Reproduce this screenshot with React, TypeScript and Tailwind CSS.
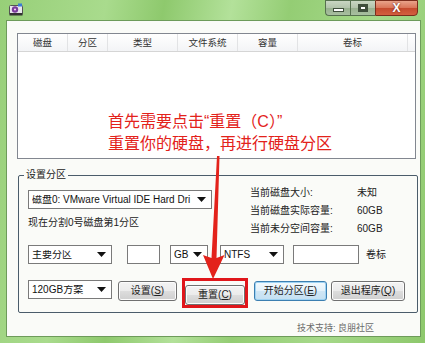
import React from "react";

const FONT = "font-['Liberation_Sans','Noto_Sans_CJK_SC',sans-serif]";

const COLUMNS = [
  { label: "磁盘", w: "w-[50px]" },
  { label: "分区", w: "w-[40px]" },
  { label: "类型", w: "w-[70px]" },
  { label: "文件系统", w: "w-[60px]" },
  { label: "容量", w: "w-[60px]" },
  { label: "卷标", w: "w-[110px]" },
];

const DISK_INFO = [
  { label: "当前磁盘大小:", value: "未知" },
  { label: "当前磁盘实际容量:", value: "60GB" },
  { label: "当前未分空间容量:", value: "60GB" },
];

const Caret = () => (
  <svg width="9" height="5" viewBox="0 0 9 5" className="shrink-0">
    <polygon points="0,0 9,0 4.5,5" fill="#111" />
  </svg>
);

type ComboProps = { text: string; className: string };

const Combo = ({ text, className }: ComboProps) => (
  <div
    className={`h-[19px] flex items-center gap-[3px] bg-white border border-[#7a7a7a] pl-[3px] pr-[5px] ${className}`}
  >
    <span className="flex-1 min-w-0 overflow-hidden whitespace-nowrap text-[10px] leading-none text-[#111]">
      {text}
    </span>
    <Caret />
  </div>
);

type BtnProps = { text: string; hot: string; className: string; focused?: boolean };

const WinButton = ({ text, hot, className, focused }: BtnProps) => (
  <button
    className={`h-[20px] rounded-[3px] border text-[10px] leading-none text-[#222] ${
      focused
        ? "border-[#3c7fb1] bg-[linear-gradient(#f4fafd_0%,#e3f1fa_50%,#cfe6f5_51%,#c4e0f2_100%)] shadow-[inset_0_0_0_1px_#9fd3f3]"
        : "border-[#707070] bg-[linear-gradient(#f3f3f3_0%,#ebebeb_50%,#dddddd_51%,#cfcfcf_100%)] shadow-[inset_0_0_0_1px_#fcfcfc]"
    } ${className}`}
  >
    {text}(<span className="underline">{hot}</span>)
  </button>
);

const TitleIcon = () => (
  <svg width="14" height="13" viewBox="0 0 14 13">
    <rect x="0.5" y="2.5" width="13" height="9" rx="1" fill="#e8e8ec" stroke="#555" />
    <rect x="0.5" y="10" width="13" height="2.5" fill="#333" />
    <circle cx="6" cy="6.5" r="3.2" fill="#7a3c9c" />
    <circle cx="6" cy="6.5" r="1.1" fill="#f2d0f0" />
    <rect x="9" y="0.5" width="4" height="3" fill="#3a7bd5" />
  </svg>
);

const CaptionButtons = () => (
  <div className="flex h-[16px] mr-[7px]">
    <div className="w-[25px] h-full rounded-bl-[4px] border border-r-0 border-[#56704f] bg-[linear-gradient(#c9d6c3_0%,#b1c3aa_50%,#98b08f_51%,#a8bfa0_100%)] flex items-end justify-center pb-[3px]">
      <div className="w-[11px] h-[4px] bg-white border border-[#3f4f3c]" />
    </div>
    <div className="w-[25px] h-full border border-r-0 border-[#56704f] bg-[linear-gradient(#c9d6c3_0%,#b1c3aa_50%,#98b08f_51%,#a8bfa0_100%)] flex items-center justify-center">
      <div className="w-[10px] h-[8px] border-2 border-[#3f4f3c] bg-white shadow-[inset_0_0_0_1px_#3f4f3c]" />
    </div>
    <div className="w-[43px] h-full rounded-br-[4px] border border-[#7a2d1c] bg-[linear-gradient(#e9a38a_0%,#d97457_50%,#c54a2d_51%,#d3603f_100%)] flex items-center justify-center">
      <span className="text-[12px] font-bold leading-none text-white [text-shadow:0_0_2px_#5a1a0e]">X</span>
    </div>
  </div>
);

export default function App() {
  return (
    <div
      className={`relative w-[425px] h-[343px] overflow-hidden ${FONT} bg-[linear-gradient(100deg,#97cf78_0%,#a9db8d_22%,#8ec96d_34%,#b3e19a_48%,#94cd74_60%,#a6d98a_78%,#8dc86c_100%)]`}
    >
      <div className="h-[20px] flex items-start justify-between">
        <div className="pl-[9px] pt-[3px]">
          <TitleIcon />
        </div>
        <CaptionButtons />
      </div>

      <div className="ml-[6px] mr-[4px] h-[317px] border border-[#6d9b5a] bg-[#fafbf8] flex flex-col">
        {/* list of partitions */}
        <div className="relative mt-[12px] ml-[10px] w-[399px] h-[126px] border border-[#828790] bg-white">
          <div className="flex h-[18px] border-b border-[#d5d5d5] bg-[linear-gradient(#ffffff,#f3f4f6)]">
            {COLUMNS.map((c) => (
              <div
                key={c.label}
                className={`${c.w} h-full flex items-center justify-center border-r border-[#e2e3e5] text-[9.5px] leading-none text-[#333]`}
              >
                {c.label}
              </div>
            ))}
          </div>
          <div className="absolute left-[90px] top-[77px] text-[16px] leading-[22px] text-[#e3221b] whitespace-nowrap">
            <p>首先需要点击“重置（C）”</p>
            <p>重置你的硬盘，再进行硬盘分区</p>
          </div>
        </div>

        {/* 设置分区 group */}
        <div className="relative mt-[16px] ml-[11px] w-[400px] h-[138px] border border-[#4b5c6b] rounded-[2px]">
          <span className="absolute -top-[7px] left-[5px] px-[2px] bg-[#fafbf8] text-[10px] leading-[12px] text-[#222]">
            设置分区
          </span>

          <div className="h-[69px] flex">
            <div className="ml-[9px] mt-[14px] w-[184px]">
              <Combo text="磁盘0: VMware Virtual IDE Hard Dri" className="w-[184px]" />
              <p className="mt-[7px] text-[10px] leading-[14px] text-[#222]">现在分割0号磁盘第1分区</p>
            </div>
            <div className="ml-[38px] mt-[8px] text-[10px] leading-[18px] text-[#222]">
              {DISK_INFO.map((r) => (
                <div key={r.label} className="flex">
                  <span className="w-[107px]">{r.label}</span>
                  <span>{r.value}</span>
                </div>
              ))}
            </div>
          </div>

          <div className="flex items-center ml-[9px] h-[19px]">
            <Combo text="主要分区" className="w-[84px]" />
            <div className="ml-[15px] w-[33px] h-[19px] bg-white border border-[#7a7a7a]" />
            <Combo text="GB" className="ml-[10px] w-[38px]" />
            <Combo text="NTFS" className="ml-[12px] w-[64px]" />
            <div className="ml-[9px] w-[66px] h-[19px] bg-white border border-[#7a7a7a]" />
            <span className="ml-[7px] text-[10px] text-[#222]">卷标</span>
          </div>

          <div className="flex items-start ml-[9px] mt-[16px]">
            <Combo text="120GB方案" className="w-[84px]" />
            <WinButton text="设置" hot="S" className="ml-[6px] mt-px w-[59px]" />
            <div className="relative ml-[8px] mt-px">
              <WinButton text="重置" hot="C" className="w-[60px]" />
              <span className="absolute -inset-[3px] border-[3px] border-[#e0161b]" />
            </div>
            <WinButton text="开始分区" hot="E" focused className="ml-[9px] mt-px w-[73px]" />
            <WinButton text="退出程序" hot="Q" className="ml-[4px] mt-px w-[74px]" />
          </div>
        </div>

        <p className="mt-[9px] ml-[290px] text-[9px] leading-[12px] text-[#6b6b6b]">技术支持: 良朋社区</p>
      </div>

      {/* red annotation arrow */}
      <svg className="absolute left-0 top-0 pointer-events-none" width="425" height="343" viewBox="0 0 425 343">
        <polygon
          points="217,156 219.5,156 216.5,258 224.5,255 213,279 203,255 211.5,258"
          fill="#e3221b"
        />
      </svg>
    </div>
  );
}
